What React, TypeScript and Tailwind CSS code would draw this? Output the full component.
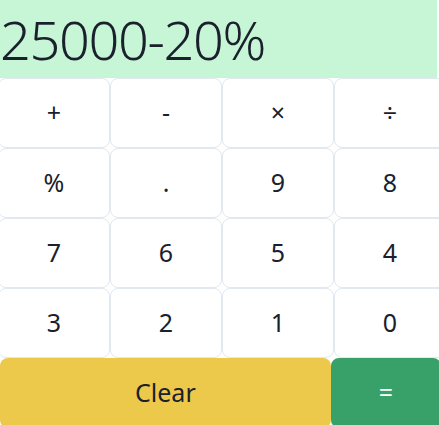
const keys = ["+", "-", "×", "÷", "%", ".", "9", "8", "7", "6", "5", "4", "3", "2", "1", "0"];

export default function App() {
  return (
    <div
      className="w-[439px] h-[425px] overflow-hidden bg-white text-[#1a202c]"
      style={{ fontFamily: '"Noto Sans", "Open Sans", sans-serif' }}
    >
      <div className="w-[437px] h-[78px] bg-[#c6f6d5] flex items-center text-[54px] font-light tracking-tight leading-none">
        25000-20%
      </div>
      <div className="-ml-[2px] w-[448px] grid grid-cols-4">
        {keys.map((k) => (
          <button
            key={k}
            className="h-[70px] bg-white border border-[#e2e8f0] rounded-lg text-[25px] flex items-center justify-center"
          >
            {k}
          </button>
        ))}
      </div>
      <div className="w-[441px] grid grid-cols-4">
        <button className="col-span-3 h-[70px] bg-[#ecc94b] rounded-lg text-[25px]">Clear</button>
        <button className="h-[70px] bg-[#38a169] rounded-lg text-[25px] text-white">=</button>
      </div>
    </div>
  );
}
